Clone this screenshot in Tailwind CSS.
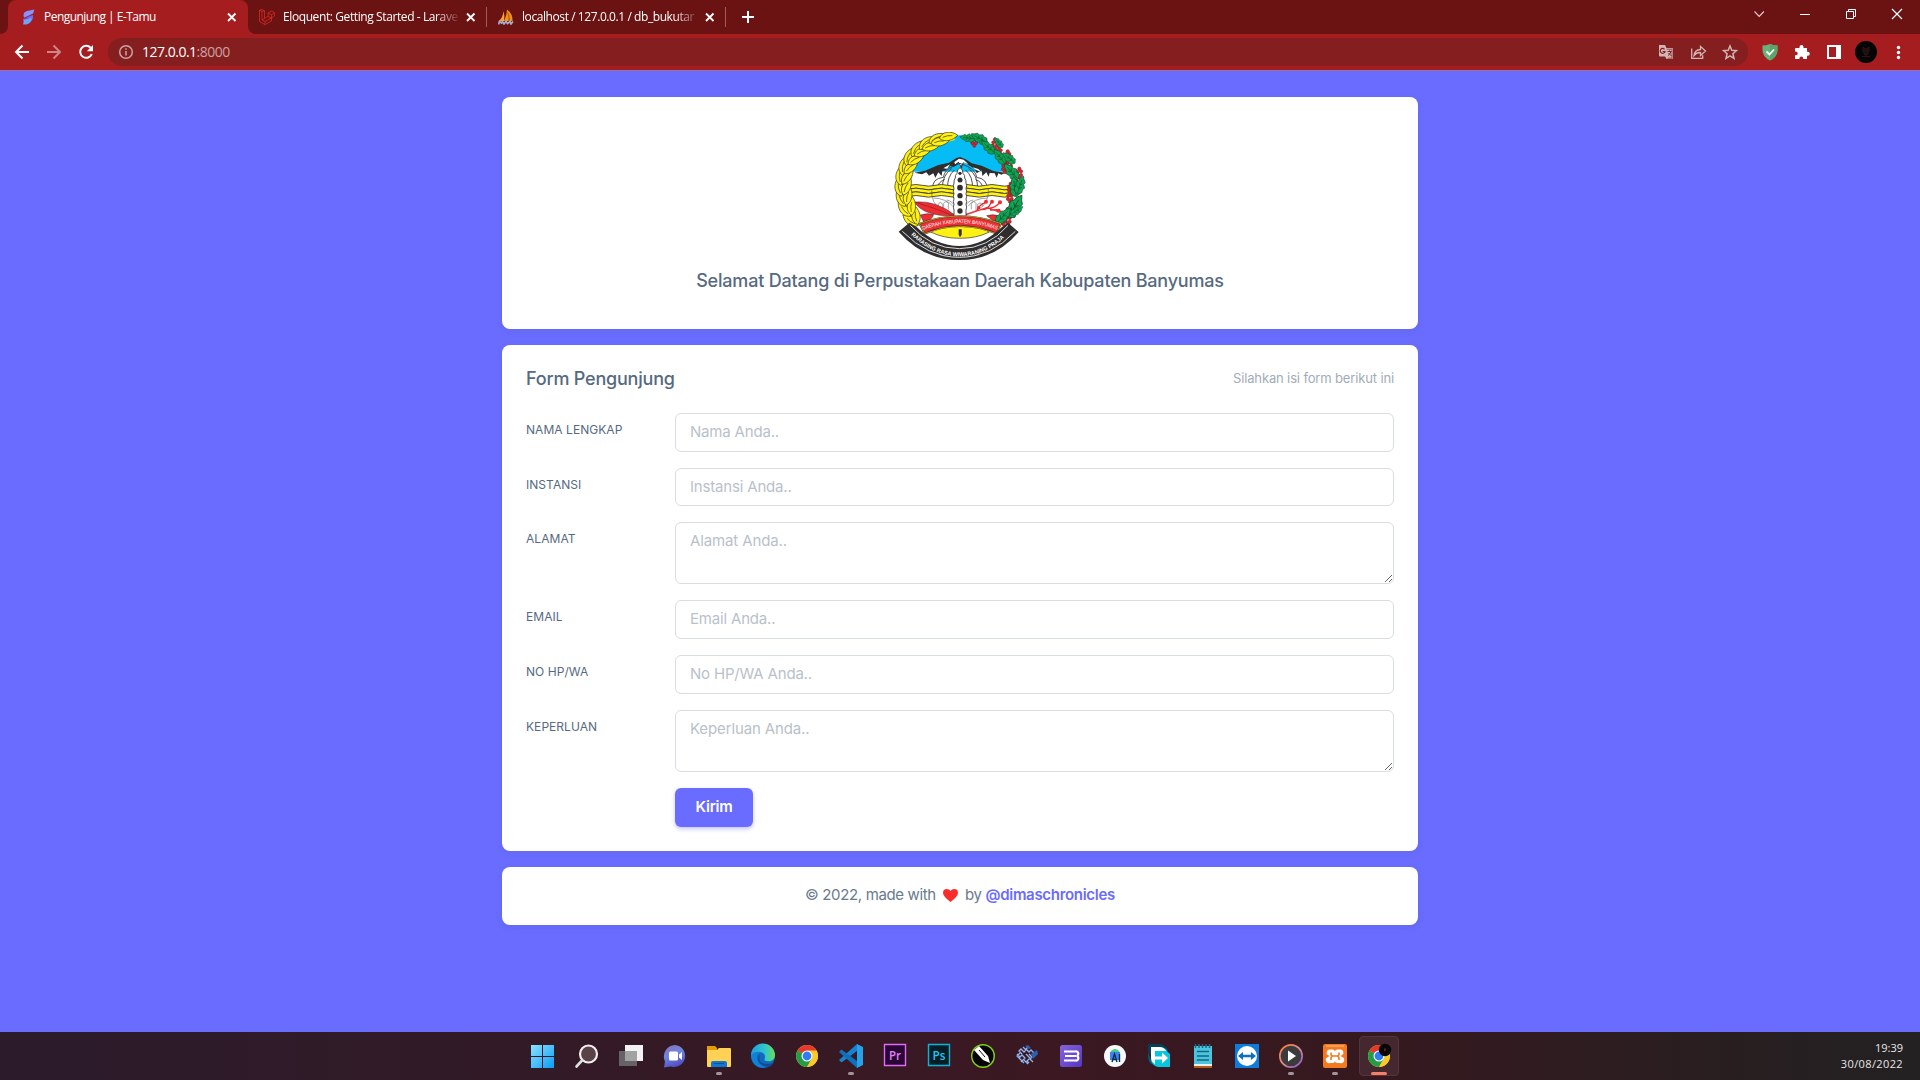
<!DOCTYPE html>
<html lang="id">
<head>
<meta charset="utf-8">
<title>Pengunjung | E-Tamu</title>
<script src="https://cdn.jsdelivr.net/npm/@tailwindcss/browser@4"></script>
</head>
<body class="w-[1920px] h-[1080px] overflow-hidden flex flex-col bg-[#696cff] font-['Inter',sans-serif]">

<!-- Tab strip -->
<header class="h-[34px] shrink-0 flex bg-[#6b1213] text-white text-xs font-['Open_Sans','Noto_Sans',sans-serif]">
  <div class="w-2 flex items-end"><svg class="w-2 h-2" viewBox="0 0 8 8"><path d="M8 0v8H0a8 8 0 0 0 8-8z" fill="#a51d1f"/></svg></div>
  <div class="w-[240px] h-full rounded-t-lg bg-[#a51d1f] flex items-center pl-3">
    <svg class="w-4 h-4 shrink-0" viewBox="0 0 16 16"><path d="M14.500.5 7 2Q3.500 3 3.500 6L4 8.500 8 7 13 4.500z" fill="#8592ff"/><path d="M3.500 6Q3.500 8.500 6 8.500L13 6V9Q13 11 10 12L3.500 12.500 3 10 9 9 4 8.500z" fill="#686cff"/><path d="M11 9 4 11 3 15.500 6.500 15.500Q10.500 14.500 12 10.500z" fill="#6da2ff"/></svg>
    <span class="ml-2 w-[180px] tracking-[-0.53px] whitespace-nowrap">Pengunjung | E-Tamu</span>
    <svg class="w-4 h-4" viewBox="0 0 16 16" stroke="#fff" stroke-width="1.800"><path d="m4 4.500 7.500 7.500M11.500 4.500 4 12"/></svg>
  </div>
  <div class="w-[239px] h-full flex items-center relative pl-[11px]">
    <svg class="absolute left-0 bottom-0 w-2 h-2" viewBox="0 0 8 8"><path d="M0 0v8h8a8 8 0 0 1-8-8z" fill="#a51d1f"/></svg>
    <svg class="w-4 h-4 shrink-0" viewBox="0 0 16 16" fill="none" stroke="#d92a24" stroke-width=".8"><path d="M.5 1.200 3 .6 5.500 1.700V9.500L9 7.500V4L12.500 2 15.500 3.800V7L12.500 9V12L6 15.600.5 12.500zM.5 1.200 3 2.500 5.500 1.700M3 2.500V11L6 12.500V15.600M3 11 5.500 9.500M6 12.500 12.500 9 9 7.500M9 4 12.500 5.700 15.500 3.800M12.500 5.700V9"/></svg>
    <span class="ml-2 w-[176px] whitespace-nowrap tracking-[-0.4px] [mask-image:linear-gradient(to_right,black_152px,transparent_178px)]">Eloquent: Getting Started - Larave</span>
    <svg class="ml-1 w-4 h-4 shrink-0" viewBox="0 0 16 16" stroke="#fff" stroke-width="1.800"><path d="m4 4.500 7.500 7.500M11.500 4.500 4 12"/></svg>
    <i class="absolute right-0 top-[7px] w-px h-5 bg-[#a25c5d]"></i>
  </div>
  <div class="w-[239px] h-full flex items-center relative pl-[11px]">
    <svg class="w-4 h-4 shrink-0" viewBox="0 0 16 16"><path d="M1 12Q5 8 5.500 2Q7 7 6 12z" fill="#f7a13a"/><path d="M6 12Q9 6 9 .5Q15 5 14.500 12z" fill="#f39019"/><path d="M9 2Q11 8 10.500 12H12Q12 6 9 2z" fill="#9d5b14"/><path d="M.5 15.500 1.500 12.500 3.500 14 4.500 12.500 6 15 8 12.500 9.500 14.500 12 12.500 13 15 15 12.500" fill="none" stroke="#a8aecb" stroke-width="1.700"/></svg>
    <span class="ml-2 w-[176px] whitespace-nowrap tracking-[-0.42px] [mask-image:linear-gradient(to_right,black_152px,transparent_178px)]">localhost / 127.0.0.1 / db_bukutar</span>
    <svg class="ml-1 w-4 h-4 shrink-0" viewBox="0 0 16 16" stroke="#fff" stroke-width="1.800"><path d="m4 4.500 7.500 7.500M11.500 4.500 4 12"/></svg>
    <i class="absolute right-0 top-[7px] w-px h-5 bg-[#a25c5d]"></i>
  </div>
  <svg class="ml-4 mt-[11px] w-3 h-3" viewBox="0 0 12 12" stroke="#fff" stroke-width="2"><path d="M6 0v12M0 6h12"/></svg>
  <div class="ml-auto flex h-[28px] items-center">
    <svg class="w-[46px] h-[28px]" viewBox="0 0 46 28" fill="none" stroke="#e8cfcf" stroke-width="1.100"><path d="m18.500 11.500 4.700 5 4.700-5"/></svg>
    <svg class="w-[46px] h-[28px]" viewBox="0 0 46 28" stroke="#fff"><path d="M18 14.500h10"/></svg>
    <svg class="w-[46px] h-[28px]" viewBox="0 0 46 28" fill="none" stroke="#fff"><path d="M18.500 11.500h7v7h-7zM20.500 11.500v-2h7v7h-2"/></svg>
    <svg class="w-[46px] h-[28px]" viewBox="0 0 46 28" stroke="#fff" stroke-width="1.200"><path d="m18 9 10 10M28 9 18 19"/></svg>
  </div>
</header>

<!-- Toolbar -->
<nav class="h-[37px] shrink-0 flex items-center pl-[6px] pr-[6px] pb-px bg-[#a51d1f] border-b border-[#9a6fa8]">
  <svg class="w-8 h-8" viewBox="0 0 32 32" fill="none" stroke="#fff" stroke-width="2"><path d="M23 16H10M16.500 9.500 10 16l6.500 6.500"/></svg>
  <svg class="w-8 h-8" viewBox="0 0 32 32" fill="none" stroke="#cf8485" stroke-width="2"><path d="M9 16h13M15.500 9.500 22 16l-6.500 6.500"/></svg>
  <svg class="w-8 h-8" viewBox="0 0 32 32" fill="none" stroke="#fff" stroke-width="2"><path d="M21.800 18a6 6 0 1 1-1.200-6.300"/><path d="M23 9v6.200h-6.200z" fill="#fff" stroke="none"/></svg>
  <div class="ml-[6px] w-[1640px] h-7 rounded-full bg-[#841e1f] flex items-center pl-[10px] pr-0.5 font-['Open_Sans','Noto_Sans',sans-serif]">
    <svg class="w-4 h-4" viewBox="0 0 16 16" fill="none" stroke="#c9a5a5" stroke-width="1.500"><circle cx="8" cy="8" r="6.300"/><path d="M8 7v4.500M8 4.300v1.500"/></svg>
    <span class="ml-2 text-sm tracking-[-0.5px] text-white">127.0.0.1<span class="text-[#cba2a3]">:8000</span></span>
    <div class="ml-auto flex">
      <svg class="w-8 h-8" viewBox="0 0 32 32"><path d="M9 9h6l1.500 3H22a1 1 0 0 1 1 1v9a1 1 0 0 1-1 1h-5.500L15 20.500H10a1 1 0 0 1-1-1z" fill="#d3b4b4"/><path d="M14.500 13.300a2.400 2.400 0 1 0 .5 2.200h-2.300" fill="none" stroke="#7e2223" stroke-width="1.200"/><path d="M16.700 13.200H22v9h-4.500" fill="none" stroke="#7e2223" stroke-width=".7"/><path d="M17.500 15.500h4M19.500 14.500v1M21 15.500q-1 3-3 4M18.500 17l3 3" stroke="#7e2223" stroke-width="1" fill="none"/></svg>
      <svg class="w-8 h-8" viewBox="0 0 32 32" fill="none" stroke="#d3b4b4" stroke-width="1.300"><path d="M9.700 12.500v9.800h11v-3M12 19.500q.5-5.500 6.500-6v-3l5 4.500-5 4.500v-3q-4-.3-6.500 3z"/></svg>
      <svg class="w-8 h-8" viewBox="0 0 32 32" fill="none" stroke="#d3b4b4" stroke-width="1.500"><path d="m16 10 1.800 4.300 4.600.4-3.500 3 1.100 4.600-4-2.500-4 2.500 1.100-4.600-3.500-3 4.600-.4z"/></svg>
    </div>
  </div>
  <div class="ml-[6px] flex">
    <svg class="w-8 h-8" viewBox="0 0 32 32"><path d="M16 8q4 1.500 7.500 1.600V14q0 7-7.500 10.500Q8.500 21 8.500 14V9.600Q12 9.500 16 8z" fill="#67b279"/><path d="M16 8q4 1.500 7.500 1.600V14q0 7-7.500 10.500z" fill="#5aa56c"/><path d="m12.500 15.500 3 3 4.500-5" fill="none" stroke="#fff" stroke-width="1.800"/></svg>
    <svg class="w-8 h-8" viewBox="0 0 32 32" fill="#fff"><path d="M10 12h3.500v-1a2 2 0 0 1 4 0v1H21v3.800h.8a2 2 0 0 1 0 4H21V23h-3.800v-.6a1.900 1.900 0 0 0-3.800 0v.6H9v-3.700h.8a1.900 1.900 0 0 0 0-3.800H9V13a1 1 0 0 1 1-1z"/></svg>
    <svg class="w-8 h-8" viewBox="0 0 32 32"><path d="M9 9h14v14H9z" fill="#fff"/><path d="M11 11h7v10h-7z" fill="#a51d1f"/></svg>
    <svg class="w-8 h-8" viewBox="0 0 32 32"><circle cx="16" cy="16" r="11" fill="#050505"/><path d="m13 11 2 2h2l2-2v4l-2 4h-2l-2-4zM12 20.500h8" fill="#1d1011" stroke="#3e1416" stroke-width=".8"/></svg>
    <svg class="w-8 h-8" viewBox="0 0 32 32" fill="#fff"><circle cx="16.500" cy="11.500" r="1.700"/><circle cx="16.500" cy="16.500" r="1.700"/><circle cx="16.500" cy="21.500" r="1.700"/></svg>
  </div>
</nav>

<main class="flex-1 flex flex-col items-center gap-4 pt-[26px] text-[#566a7f]">
  <section class="w-[916px] h-[232px] shrink-0 rounded-lg bg-white shadow-[0_2px_6px_rgba(67,89,113,0.12)] flex flex-col items-center pt-[35px]">
    <svg class="w-[132px] h-[128px]" viewBox="42 36 396 384">
      <defs>
        <path id="grain" d="M0 6C-19-6-17-32 2-50 15-32 16-8 0 6zM-1-4Q-5-20 0-34" fill="#fff112" stroke="#3a391c" stroke-width="2"/>
        <path id="leaf" d="M0 4-8-1-12-10-9-14-12-24-7-29-5-37 1-44 5-36 10-30 8-24 13-16 9-11 10-3zM0 2V-34M0-10l-6-6M0-10l6-6M0-20l-5-5M0-20l5-5" fill="#0ba553" stroke="#1c4a2c" stroke-width="1.500"/>
        <g id="berry" fill="#d8232a" stroke="#7d1a1e" stroke-width="1.500"><circle cx="-5" cy="-5" r="5"/><circle cx="5" cy="-6" r="5"/><circle cx="-6" cy="5" r="5"/><circle cx="5" cy="5" r="5"/><circle cy="13" r="5"/><circle cy="-14" r="5"/></g>
        <path id="motto" d="M90 342Q160 409 239 409T385 342"/>
        <path id="region" d="M123 332Q240 287 357 331"/>
      </defs>
      <path d="M226 46H248Q345 70 372 112L394 165H95L112 115Q160 60 226 46z" fill="#05bdf4"/>
      <path d="M96 155H388L402 240 370 310H105L84 220z" fill="#fff"/>
      <path d="M103 158 135 152 175 135 207 128 229 114 240 111 257 118 275 130 305 137 340 153 376 158 364 164 355 160 350 173 344 160 329 159 326 170 319 157 307 168 305 151 290 160 284 147 262 133 252 126 244 148 237 128 222 140 211 138 196 152 187 153 185 168 175 157 166 173 160 160 147 167 139 157 126 163z" fill="#302d2e"/>
      <path d="m223 126 14-10 14 3 14 14-15-6-7 10-7-12-11 8zM190 145l20-12-8 13zM278 142l17 5 10 10-18-8z" fill="#fff"/>
      <g fill="none" stroke="#302d2e" stroke-width="2.500"><path d="M158 207q-2-32 32-35 4-23 28-32l22-10 24 10q23 12 26 32 32 4 31 35M171 205q3-19 23-26M187 205q0-40 28-59M203 205q-2-35 20-55M309 205q-3-20-22-26M293 205q0-40-27-59M277 205q3-34-20-55"/></g>
      <g stroke="#302d2e" stroke-width="2.500" fill="#fff112"><path d="M88 196q20-5 39 0t38 0 38 0 38 0 38 0 38 0 38 0 38 0V207q-20 5-38 0t-38 0-38 0-38 0-38 0-38 0-38 0-38 0z"/><path d="M88 207q20-5 39 0t38 0 38 0 38 0 38 0 38 0 38 0 38 0V218q-20 5-38 0t-38 0-38 0-38 0-38 0-38 0-38 0-38 0z"/><path d="M88 218q20-5 39 0t38 0 38 0 38 0 38 0 38 0 38 0 38 0V229q-20 5-38 0t-38 0-38 0-38 0-38 0-38 0-38 0-38 0z"/></g>
      <g fill="none" stroke="#55494b" stroke-width="1.500"><path d="M155 207q-3 44 30 62 27 15 54 15t55-15q34-18 31-62M160 234q40 2 58 24M322 234q-42 2-57 24M175 263v-10q6-12 12 0v18M191 270v-20q7-10 14 0v18M274 268v-18q7-10 14 0v20M293 265v-12q7-9 14 0v5M200 240q18 3 26 22M280 240q-18 3-26 22"/></g>
      <path d="M103 246Q170 240 228 288 130 290 103 246z" fill="#ee2d33" stroke="#302d2e" stroke-width="1.500"/>
      <path d="M103 246Q160 262 222 288" fill="none" stroke="#8c1c20" stroke-width="2"/>
      <path d="M121 285q20-7 40-2-5 20-30 23zM320 287q20-6 34 0l14 21-30-7z" fill="#ee2d33" stroke="#302d2e" stroke-width="1.500"/>
      <g fill="none" stroke="#ee2d33" stroke-width="4"><path d="M252 286 320 263 353 274M290 274q8-22 28-27M305 269q20 0 28-21M320 265q20 2 38-15M330 270l25-1"/></g>
      <g fill="#ee2d33"><circle cx="318" cy="245" r="6"/><circle cx="336" cy="245" r="6"/><circle cx="360" cy="247" r="6"/><circle cx="296" cy="263" r="5"/><circle cx="356" cy="272" r="6"/></g>
      <path d="M240 143q10 6 9 17 7 6 5 14 5 6 4 15 4 8 0 17 4 8 0 15 4 8 0 16 4 8 0 16 4 8 0 17v20h-36v-20q-4-9 0-17-4-8 0-16-4-8 0-16-4-7 0-15-4-9 0-17-1-9 4-15-2-8 5-14-1-11 9-17z" fill="#fff" stroke="#302d2e" stroke-width="2.500"/>
      <g fill="#302d2e"><circle cx="240" cy="160" r="5"/><circle cx="240" cy="180" r="7.500"/><circle cx="240" cy="203" r="8.500"/><circle cx="240" cy="227" r="8"/><circle cx="240" cy="250" r="8"/><circle cx="240" cy="273" r="8"/></g>
      <path d="M108 300Q62 245 66 190 75 80 222 48" fill="none" stroke="#fff112" stroke-width="24"/>
      <g>
        <use href="#grain" transform="translate(110 313) rotate(-58)"/><use href="#grain" transform="translate(112 308) rotate(-10)"/>
        <use href="#grain" transform="translate(88 284) rotate(-44)"/><use href="#grain" transform="translate(95 280) rotate(0)"/>
        <use href="#grain" transform="translate(73 254) rotate(-28)"/><use href="#grain" transform="translate(80 250) rotate(10)"/>
        <use href="#grain" transform="translate(63 223) rotate(-14)"/><use href="#grain" transform="translate(72 220) rotate(22)"/>
        <use href="#grain" transform="translate(62 190) rotate(-4)"/><use href="#grain" transform="translate(70 188) rotate(34)"/>
        <use href="#grain" transform="translate(68 160) rotate(6)"/><use href="#grain" transform="translate(77 157) rotate(46)"/>
        <use href="#grain" transform="translate(80 131) rotate(18)"/><use href="#grain" transform="translate(89 130) rotate(58)"/>
        <use href="#grain" transform="translate(99 105) rotate(30)"/><use href="#grain" transform="translate(108 105) rotate(66)"/>
        <use href="#grain" transform="translate(123 84) rotate(44)"/><use href="#grain" transform="translate(132 86) rotate(74)"/>
        <use href="#grain" transform="translate(152 66) rotate(60)"/><use href="#grain" transform="translate(159 70) rotate(78)"/>
        <use href="#grain" transform="translate(184 54) rotate(78)"/>
      </g>
      <g>
        <use href="#berry" transform="translate(283 64)"/><use href="#berry" transform="translate(345 72)"/><use href="#berry" transform="translate(357 97)"/><use href="#berry" transform="translate(383 108)"/><use href="#berry" transform="translate(388 133)"/><use href="#berry" transform="translate(375 143)"/><use href="#berry" transform="translate(418 160)"/><use href="#berry" transform="translate(392 205)"/><use href="#berry" transform="translate(390 232)"/><use href="#berry" transform="translate(384 300)"/><use href="#berry" transform="translate(370 300)"/><use href="#berry" transform="translate(405 190)"/>
        <use href="#leaf" transform="translate(283 56) rotate(-84)"/><use href="#leaf" transform="translate(318 66) rotate(-62) scale(1.150)"/><use href="#leaf" transform="translate(342 97) rotate(-48) scale(1.150)"/><use href="#leaf" transform="translate(366 80) rotate(-40) scale(.8)"/>
        <use href="#leaf" transform="translate(373 128) rotate(-38) scale(1.150)"/><use href="#leaf" transform="translate(402 127) rotate(-50)"/>
        <use href="#leaf" transform="translate(411 174) rotate(-42) scale(1.300)"/><use href="#leaf" transform="translate(408 226) rotate(-8) scale(1.300)"/><use href="#leaf" transform="translate(413 218) rotate(18) scale(1.200)"/>
        <use href="#leaf" transform="translate(388 288) rotate(30) scale(1.650)"/><use href="#leaf" transform="translate(353 307) rotate(42) scale(1.300)"/><use href="#leaf" transform="translate(396 282) rotate(55) scale(.9)"/>
      </g>
      <path d="M152 336Q240 285 328 336 290 355 240 355T152 336z" fill="#fff112" stroke="#302d2e" stroke-width="2"/>
      <path d="M236 328h9v16l-5 8-4-8z" fill="#302d2e"/>
      <path d="M118 311Q240 265 363 311L350 341Q240 296 134 341z" fill="#ee2d33" stroke="#302d2e" stroke-width="5"/>
      <path d="M118 311Q240 265 363 311L350 341Q240 296 134 341z" fill="none" stroke="#ffd21a" stroke-width="2"/>
      <text font-family="Liberation Sans, sans-serif" font-size="16" fill="#fff"><textPath href="#region" startOffset="6" textLength="228" lengthAdjust="spacingAndGlyphs">DAERAH KABUPATEN BANYUMAS</textPath></text>
      <path d="M88 308 56 335Q130 420 238 420T416 336L384 308 366 321Q308 378 238 378T110 321z" fill="#302d2e"/>
      <path d="M91 316Q152 386 238 386T384 316M67 334Q143 412 238 412T406 334" fill="none" stroke="#fff" stroke-width="2.500"/>
      <text font-family="Liberation Sans, sans-serif" font-size="17" font-weight="bold" fill="#fff"><textPath href="#motto" startOffset="4" textLength="312" lengthAdjust="spacingAndGlyphs">RARASING RASA WIWARANING PRAJA</textPath></text>
    </svg>
    <h1 class="mt-[7px] text-lg leading-7 font-medium tracking-[-0.2px] whitespace-nowrap">Selamat Datang di Perpustakaan Daerah Kabupaten Banyumas</h1>
  </section>

  <section class="w-[916px] h-[506px] shrink-0 rounded-lg bg-white shadow-[0_2px_6px_rgba(67,89,113,0.12)] px-6">
    <div class="h-[68px] flex items-center justify-between">
      <h2 class="text-lg font-medium tracking-[-0.2px]">Form Pengunjung</h2>
      <small class="text-[13px] tracking-[-0.14px] text-[#a1acb8]">Silahkan isi form berikut ini</small>
    </div>
    <form class="grid grid-cols-[149px_719px] gap-y-4 text-xs [&_label]:pt-[9px] [&_label]:tracking-[0.05px] [&_input]:tracking-[-0.18px] [&_textarea]:tracking-[-0.13px]">
      <label>NAMA LENGKAP</label>
      <input class="h-[39px] rounded-md border border-[#d9dee3] px-[14px] pb-0.5 text-[15px] placeholder:text-[#b9c1ca]" placeholder="Nama Anda..">
      <label>INSTANSI</label>
      <input class="h-[38px] rounded-md border border-[#d9dee3] px-[14px] pb-0.5 text-[15px] placeholder:text-[#b9c1ca]" placeholder="Instansi Anda..">
      <label>ALAMAT</label>
      <textarea class="block h-[62px] rounded-md border border-[#d9dee3] px-[14px] py-[6px] text-[15px] leading-[23px] placeholder:text-[#b9c1ca]" placeholder="Alamat Anda.."></textarea>
      <label>EMAIL</label>
      <input class="h-[39px] rounded-md border border-[#d9dee3] px-[14px] pb-0.5 text-[15px] placeholder:text-[#b9c1ca]" placeholder="Email Anda..">
      <label>NO HP/WA</label>
      <input class="h-[39px] rounded-md border border-[#d9dee3] px-[14px] pb-0.5 text-[15px] placeholder:text-[#b9c1ca]" placeholder="No HP/WA Anda..">
      <label>KEPERLUAN</label>
      <textarea class="block h-[62px] rounded-md border border-[#d9dee3] px-[14px] py-[6px] text-[15px] leading-[23px] placeholder:text-[#b9c1ca]" placeholder="Keperluan Anda.."></textarea>
      <button type="button" class="col-start-2 w-[78px] h-[39px] rounded-md bg-[#696cff] pb-0.5 text-[15px] font-semibold tracking-[-0.2px] text-white shadow-[0_2px_4px_rgba(105,108,255,0.4)]">Kirim</button>
    </form>
  </section>

  <footer class="w-[916px] h-[58px] shrink-0 rounded-lg bg-white shadow-[0_2px_6px_rgba(67,89,113,0.12)] flex items-center justify-center pb-0.5 text-[15px] text-[#697a8d] whitespace-nowrap">
    <span class="tracking-[-0.35px]">© 2022, made with</span>
    <svg class="mx-[7px] w-[15px] h-[13px]" viewBox="0 0 15 13"><path d="M7.500 13Q0 7.500 0 3.800 0 0 3.800 0 6.300 0 7.500 2 8.700 0 11.200 0 15 0 15 3.800 15 7.500 7.500 13z" fill="#fb2c2c"/></svg>
    <span class="tracking-[-0.3px]">by <a class="font-semibold text-[#696cff]">@dimaschronicles</a></span>
  </footer>
</main>

<!-- Taskbar -->
<div class="h-12 shrink-0 flex pl-[521px] bg-[linear-gradient(90deg,#2b1b2b_0%,#321a26_28%,#3b1822_55%,#35191f_72%,#281e20_90%,#232122_100%)] [&>svg]:w-11 [&>svg]:h-12 [&>svg]:shrink-0">
  <svg viewBox="0 0 44 48"><defs><linearGradient id="win" x2="1" y2="1"><stop stop-color="#8be3ff"/><stop offset="1" stop-color="#0a9cf8"/></linearGradient></defs><path d="M10 13h11v11H10zM22 13h11v11H22zM10 25h11v11H10zM22 25h11v11H22z" fill="url(#win)"/></svg>
  <svg viewBox="0 0 44 48"><circle cx="23.500" cy="22" r="8.500" fill="#5a4249" stroke="#f1eff0" stroke-width="2.200"/><path d="m17 28.500-5.500 6" stroke="#ddd" stroke-width="2.600" stroke-linecap="round"/></svg>
  <svg viewBox="0 0 44 48"><path d="M16 13h18v16H16z" fill="#f2f2f2"/><path d="M10 19h18v15H10z" fill="#656365"/><path d="M16 19h12v10H16z" fill="#a3a2a3"/></svg>
  <svg viewBox="0 0 44 48"><defs><linearGradient id="chat" y2="1" x2=".4"><stop stop-color="#8c6fb8"/><stop offset=".5" stop-color="#6f86dd"/><stop offset="1" stop-color="#5250c4"/></linearGradient></defs><path d="M22 13a11 11 0 1 1-4 21.500l-7 1 1-6A11.500 11.500 0 0 1 22 13z" fill="url(#chat)"/><rect x="16" y="19.500" width="9" height="9" rx="1.500" fill="#fff"/><path d="m26 22.500 3-2.500v8l-3-2.500z" fill="#fff"/></svg>
  <svg viewBox="0 0 44 48"><path d="M10 14h8l2 2v6H10z" fill="#e39e07"/><path d="M10 18 20 18 22 16H33a1 1 0 0 1 1 1V34a1 1 0 0 1-1 1H11a1 1 0 0 1-1-1z" fill="#ffd155"/><path d="M14 35v-4a2 2 0 0 1 2-2h12a2 2 0 0 1 2 2v4z" fill="#1077d0"/><path d="M17 31.500h10" stroke="#064f98"/><rect x="19" y="40" width="6" height="3" rx="1.500" fill="#a3959b"/></svg>
  <svg viewBox="0 0 44 48"><defs><linearGradient id="edge"><stop stop-color="#1d9fe0"/><stop offset=".6" stop-color="#31c6cb"/><stop offset="1" stop-color="#67e056"/></linearGradient></defs><circle cx="22" cy="24" r="12" fill="#1268be"/><path d="M10 24a12 12 0 0 1 24-1c0 5-4 7-8 6-4 0-2-2-2-4q0-5-6-5-5 0-8 4z" fill="url(#edge)"/><path d="M10 24q3-5 9-4-4 3-3 7 1 6 9 8.500Q12 37 10 24z" fill="#0c83d7"/><path d="M19 23q-3 9 8 9 4 0 6-2-1 3-5 5-9-1-11-7 0-4 2-5z" fill="#124a93"/></svg>
  <svg viewBox="0 0 44 48"><g id="chrome"><circle cx="22" cy="24" r="11" fill="#fbc829"/><path d="M22 24 12.500 18.500A11 11 0 0 1 31.500 18.500z" fill="#e6392e"/><path d="M22 24 12.500 18.500A11 11 0 0 0 22 35l5-9z" fill="#249b45"/><path d="M22 18.500H31.500A11 11 0 0 1 22 35l5.500-9z" fill="#fbc829"/><circle cx="22" cy="24" r="5.500" fill="#fff"/><circle cx="22" cy="24" r="4.400" fill="#2e7cf6"/></g></svg>
  <svg viewBox="0 0 44 48"><path d="m28 12 6 3v18l-6 3z" fill="#24a3ec"/><path d="M28 12 10 28l2.500 2.500L28 19z" fill="#1583cf"/><path d="M28 36 10 20l2.500-2.500L28 29z" fill="#0e70b8"/><rect x="19" y="40" width="6" height="3" rx="1.500" fill="#a3959b"/></svg>
  <svg viewBox="0 0 44 48"><path d="M11.500 12.500h21v21h-21z" fill="#2a0634" stroke="#dc6bf5" stroke-width="1.400"/><text x="22" y="28" text-anchor="middle" font-family="Open Sans, sans-serif" font-size="13" font-weight="600" textLength="12" lengthAdjust="spacingAndGlyphs" fill="#e083fa">Pr</text></svg>
  <svg viewBox="0 0 44 48"><path d="M11.500 12.500h21v21h-21z" fill="#051e26" stroke="#05b5dc" stroke-width="1.400"/><text x="22" y="28" text-anchor="middle" font-family="Open Sans, sans-serif" font-size="13" font-weight="600" textLength="13" lengthAdjust="spacingAndGlyphs" fill="#1bc8f0">Ps</text></svg>
  <svg viewBox="0 0 44 48"><circle cx="22" cy="24" r="11.300" fill="#050505" stroke="#80d11b" stroke-width="1.400"/><path d="m13 18 5-4 9 10 2 7-7-3z" fill="#fff"/><path d="m18 18 6 7" stroke="#111" stroke-width="1"/></svg>
  <svg viewBox="0 0 44 48" fill="none" stroke="#8fb4ee" stroke-width="1.300"><path d="m18 15 3 3-2 2-3-3-2 2 3 3M23 15l-2 2 3 3 2-2 3 3M12 22l3 3 2-2 3 3-4 4M15 21l-3 3 7 7M21 22l4 4-3 3 2 2M24 22l3 3-2 2 3 3M19 28l4 4" /><path d="m26 22 6-4 1 4-5 5zM20 14l3-1 3 3-2 1z" fill="#2d5eb0" stroke="none"/></svg>
  <svg viewBox="0 0 44 48"><defs><linearGradient id="b" y2="1"><stop stop-color="#8564da"/><stop offset="1" stop-color="#5535c5"/></linearGradient></defs><rect x="11" y="13" width="22" height="22" rx="2.500" fill="url(#b)"/><path d="M15 19.500h11.500a2 2 0 0 1 1 4.500 2 2 0 0 1-1 4.500H15M16 24h11" fill="none" stroke="#fff" stroke-width="2.200"/></svg>
  <svg viewBox="0 0 44 48"><circle cx="22" cy="24" r="11" fill="#f7f9fa"/><path d="M18 19q4-4 8 0l1 2H17z" fill="#42cf84"/><path d="M17 20h10v8H17z" fill="#3d82ed"/><path d="m19 30 2.500-8 2.500 8M26.500 22v8M20 27.500h3" stroke="#0b2c4f" stroke-width="1.400" fill="none"/></svg>
  <svg viewBox="0 0 44 48"><path d="M11 12h14l6 5v11H19l-8-8z" fill="#073e57"/><path d="M11 20v4q0 7 5 9z" fill="#0a5872"/><path d="M14 15h8q7 0 8.500 5l2.500 2v13H21q-5-1-7-6z" fill="#06c6e2"/><path d="M14 15h8q5 0 7 4H18v13q-4-2-4-7z" fill="#fff"/><path d="M17 24.500h8v-4l6 5.500-6 5.500v-4h-8z" fill="#fff"/></svg>
  <svg viewBox="0 0 44 48"><path d="M13 14h18v19H13z" fill="#4cc4de"/><path d="M13 32h18v2.500H13z" fill="#eee"/><path d="M13 34h18v2H13z" fill="#b35d1b"/><path d="M14.500 12v4M18 12v4M21.500 12v4M25 12v4M28.500 12v4" stroke="#1d6980" stroke-width="1.500"/><path d="M16 19.500h12M16 24h12M16 28h12" stroke="#126580" stroke-width="1.600"/></svg>
  <svg viewBox="0 0 44 48"><path d="M10 12h24v24H10z" fill="#0c7ddd"/><circle cx="22" cy="24" r="10" fill="#fff"/><path d="m13 24 5-4v2.700h8V20l5 4-5 4v-2.700h-8V28z" fill="#0c6fc4"/></svg>
  <svg viewBox="0 0 44 48"><defs><linearGradient id="play" x2="1" y2="1"><stop stop-color="#ff7b2e"/><stop offset=".5" stop-color="#d88c91"/><stop offset="1" stop-color="#8d52d0"/></linearGradient></defs><circle cx="22" cy="24" r="11.200" fill="#3b3b3d" stroke="url(#play)" stroke-width="1.700"/><path d="m19 18.500 8 5.500-8 5.500z" fill="#fff"/><rect x="19" y="40" width="6" height="3" rx="1.500" fill="#a3959b"/></svg>
  <svg viewBox="0 0 44 48"><rect x="10" y="12" width="24" height="24" rx="2" fill="#f47a20"/><path d="M13 14h18" stroke="#ffc18d" stroke-width="1"/><path d="M17 17.500h2.500a2.500 2.500 0 0 1 2.500 2.500 2.500 2.500 0 0 1 2.500-2.500H27a3 3 0 0 1 2 5.500l-1.500 1 1.500 1a3 3 0 0 1-2 6h-2.500a2.500 2.500 0 0 1-2.500-2.500 2.500 2.500 0 0 1-2.500 2.500H17a3 3 0 0 1-2-6l1.500-1-1.500-1a3 3 0 0 1 2-5.500z" fill="#fff"/><path d="M18 20.500v1.500q0 2 2 2h4q2 0 2-2v-1.500M18 28v-1.500q0-2.500 2-2.500h4q2 0 2 2.500V28" fill="none" stroke="#f47a20" stroke-width="1.600"/><rect x="19" y="40" width="6" height="3" rx="1.500" fill="#a3959b"/></svg>
  <svg viewBox="0 0 44 48"><rect x="2.500" y="4.500" width="39" height="39" rx="3.500" fill="#45272f" stroke="#52353e"/><use href="#chrome"/><circle cx="28" cy="18" r="6.200" fill="#080707"/><path d="m27 16 1 1 1-1v3h-2z" fill="#6c1b1d"/><rect x="14" y="40" width="16" height="3" rx="1.500" fill="#f77f68"/></svg>
  <div class="ml-auto mr-[17px] pt-[8px] text-right text-[11px] leading-4 text-[#e9e7e7] font-['Open_Sans','Noto_Sans',sans-serif]"><div>19:39</div><div class="tracking-[0.38px]">30/08/2022</div></div>
</div>
</body>
</html>
